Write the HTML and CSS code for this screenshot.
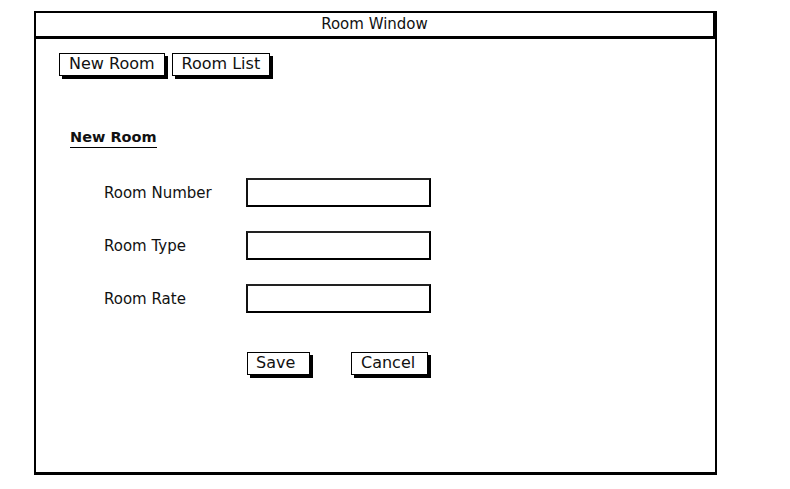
FILE: index.html
```html
<!DOCTYPE html>
<html>
<head>
<meta charset="utf-8">
<link rel="stylesheet" href="styles.css">
</head>
<body>
<div class="window">
  <div class="titlebar">Room Window</div>
  <div class="content">
    <div class="tabs">
      <span class="btn tab">New Room</span>
      <span class="btn tab">Room List</span>
    </div>
    <div class="heading">New Room</div>
    <div class="form">
      <div class="label">Room Number</div>
      <div class="input"></div>
      <div class="label">Room Type</div>
      <div class="input"></div>
      <div class="label">Room Rate</div>
      <div class="input"></div>
    </div>
    <div class="actions">
      <span class="btn save">Save</span>
      <span class="btn cancel">Cancel</span>
    </div>
  </div>
</div>
</body>
</html>
```

FILE: styles.css
```css
* { box-sizing: border-box; }
html, body { margin: 0; padding: 0; background: #fff; }
body {
  font-family: "DejaVu Sans", sans-serif;
  color: #111;
  width: 790px;
  height: 489px;
  overflow: hidden;
}
.window {
  margin: 11px 0 0 34px;
  width: 683px;
  height: 464px;
  border: 2px solid #000;
  border-bottom-width: 3px;
}
.titlebar {
  height: 26px;
  border-bottom: 3px solid #000;
  border-right: 2px solid #000;
  text-align: center;
  font-size: 15px;
  line-height: 23px;
}
.content {
  padding: 14px 0 0 23px;
}
.tabs {
  display: flex;
  gap: 7px;
}
.btn {
  display: inline-block;
  border: 1.5px solid #000;
  box-shadow: 3px 3px 0 #000;
  font-size: 16px;
  line-height: 20px;
  height: 23px;
  background: #fff;
}
.tab { padding: 0 9px 0 9px; }
.heading {
  margin: 52px 0 0 11px;
  font-size: 14.5px;
  font-weight: bold;
  line-height: 18px;
  display: inline-block;
  border-bottom: 1.5px solid #000;
  padding-bottom: 1px;
}
.form {
  margin: 30px 0 0 45px;
  display: grid;
  grid-template-columns: 142px 185px;
  grid-template-rows: 29px 29px 29px;
  row-gap: 24px;
  align-items: center;
}
.label {
  font-size: 15px;
  line-height: 18px;
}
.input {
  height: 29px;
  border: 2px solid #000;
  border-top-color: #222;
  border-left-color: #111;
}
.actions {
  margin: 39px 0 0 188px;
  display: flex;
  gap: 41px;
}
.save { width: 63px; padding-left: 8px; }
.cancel { width: 77px; padding-left: 9px; }
```
